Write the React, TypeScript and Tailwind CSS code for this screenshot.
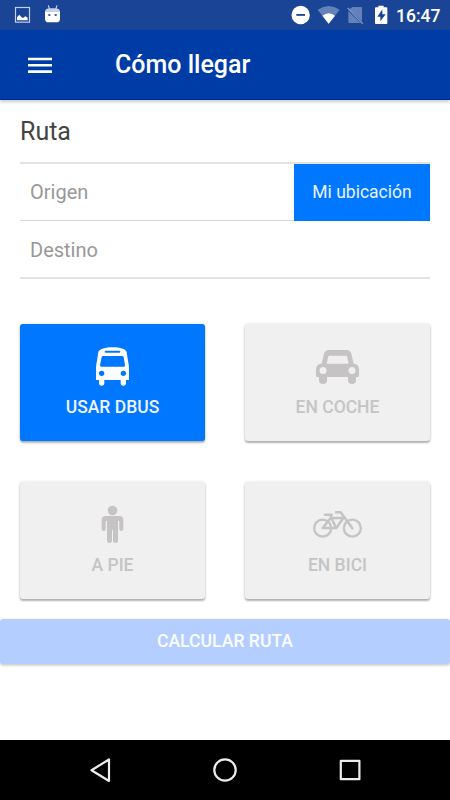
import React from "react";

function StatusBar() {
  return (
    <div className="flex h-[30px] shrink-0 items-center bg-[#1a4597]">
      <svg className="h-[30px] w-[75px]" viewBox="0 0 225 90">
        <rect x="46.500" y="22.500" width="42" height="44" fill="none" stroke="#c3d0e8" strokeWidth="3.500" />
        <path d="M51 61v-9l7-8 6 7 5 3 7-5 7 4v8z" fill="#fff" />
        <path d="M135 34h45v22q0 11-11 11h-23q-11 0-11-11z" fill="#fff" />
        <path d="M135 33q2-7 12-8h21q10 1 12 8z" fill="#c6d2e8" />
        <path d="M145 16l3 10M171 16l-3 10" stroke="#c6d2e8" strokeWidth="3.500" />
        <rect x="145" y="42" width="6" height="6" fill="#3c5fa5" />
        <rect x="164" y="42" width="6" height="6" fill="#3c5fa5" />
      </svg>
      <svg className="ml-auto h-[30px] w-[110px]" viewBox="-30 0 330 90">
        <circle cx="32" cy="45" r="27.500" fill="#fff" />
        <rect x="19" y="42" width="26" height="5.500" fill="#1a4597" />
        <path d="M83 29Q116 7 149 29L116 71z" fill="#6482b9" />
        <path d="M97 47Q116 32 135 47L116 71z" fill="#fff" />
        <path d="M187 21h26q3 0 3 3v40L178 28zM175 33l36 36h-33q-3 0-3-3z" fill="#6482b9" />
        <path d="M173 24l45 47" stroke="#7f98c5" strokeWidth="4" />
        <path d="M258 22h7v-5h16v5h8q3 0 3 3v44q0 3-3 3h-31q-3 0-3-3V25q0-3 3-3z" fill="#fff" />
        <path d="M277 28v15h10L271 64V50h-9z" fill="#1a4597" />
      </svg>
      <span className="ml-[6px] mr-[10px] w-[44px] whitespace-nowrap pt-[2px] text-[17.500px] font-medium leading-[28px] text-white">16:47</span>
    </div>
  );
}

function BusIcon() {
  return (
    <svg className="h-[41px] w-[35px]" viewBox="255 93 105 123">
      <path
        fill="#fff"
        fillRule="evenodd"
        d="M308 97C330 97 347 102 350 111L354 137Q357 150 357 160V195H348V204Q348 212 340 212Q332 212 332 204V195H283V204Q283 212 275 212Q267 212 267 204V195H258V160Q258 150 261 137L265 111C269 102 286 97 308 97ZM287 107Q284 107 284 110T287 113H328Q331 113 331 110T328 107ZM279 123Q276 123 275 126L270 151Q270 155 274 155H342Q346 155 345 151L341 126Q340 123 337 123ZM275 167A8 8 0 1 0 275 183A8 8 0 1 0 275 167ZM340 167A8 8 0 1 0 340 183A8 8 0 1 0 340 167Z"
      />
    </svg>
  );
}

function CarIcon() {
  return (
    <svg className="h-[36px] w-[45px]" viewBox="240 102 135 108">
      <path
        fill="#c5c3c4"
        fillRule="evenodd"
        d="M282 105H334C345 105 348 112 350 120L356 146C366 146 372 153 372 163V182Q372 186 368 186H363V195Q363 207 351 207Q339 207 339 195V186H276V195Q276 207 264 207Q252 207 252 195V186H247Q243 186 243 182V163C243 153 249 146 260 146L266 120C268 112 272 105 282 105ZM283 122Q281 122 280 124L275 146H341L336 124Q335 122 333 122ZM264 156A10.500 10.500 0 1 0 264 177A10.500 10.500 0 1 0 264 156ZM351 156A10.500 10.500 0 1 0 351 177A10.500 10.500 0 1 0 351 156Z"
      />
    </svg>
  );
}

function PersonIcon() {
  return (
    <svg className="h-[39px] w-[23px]" viewBox="273 105 69 117">
      <circle cx="307.500" cy="121.500" r="14.500" fill="#c5c3c4" />
      <path
        fill="#c5c3c4"
        d="M287 138H328Q340 138 340 150V177Q340 183 334 183T328 177V153H324V211Q324 219 316.500 219T309 211V180H306V211Q306 219 298.500 219T291 211V153H287V177Q287 183 281 183T275 177V150Q275 138 287 138Z"
      />
    </svg>
  );
}

function BikeIcon() {
  return (
    <svg className="h-[29px] w-[51px]" viewBox="231 120 153 87" fill="none" stroke="#c5c3c4" strokeLinecap="round" strokeLinejoin="round">
      <circle cx="263" cy="174.500" r="25.500" strokeWidth="7" />
      <circle cx="352" cy="174.500" r="25.500" strokeWidth="7" />
      <path strokeWidth="7.500" d="M270 134H290M303 126.500H317L352 175M286 136L303 174H263L287 144H325L304 174" />
    </svg>
  );
}

interface ModeCardProps {
  label: string;
  icon: React.ReactNode;
  active?: boolean;
}

function ModeCard({ label, icon, active = false }: ModeCardProps) {
  return (
    <button
      className={
        "flex h-[117.500px] flex-col items-center rounded-[3px] text-[17.500px] font-medium leading-[22px] shadow-[0_2px_2px_rgba(0,0,0,0.28),0_0_3px_rgba(0,0,0,0.14)] " +
        (active ? "bg-[#0077ff] text-[#eef3ff]" : "bg-[#f0f0f0] text-[#c5c4c5]")
      }
    >
      <span className="flex h-[72px] items-center justify-center pt-[14px]">{icon}</span>
      <span className="whitespace-nowrap">{label}</span>
    </button>
  );
}

export default function App() {
  return (
    <div className="flex h-[800px] w-[450px] flex-col overflow-hidden bg-white font-['Roboto',sans-serif]">
      <StatusBar />
      <header className="z-10 flex h-[70px] shrink-0 items-center border-b border-[#002b91] bg-[#003ca6] shadow-[0_2px_3px_rgba(0,0,0,0.2)]">
        <button className="ml-[28px]" aria-label="Menu">
          <svg className="block h-[18px] w-[24px]" viewBox="0 0 24 18" stroke="#fff" strokeWidth="2.600">
            <path d="M0 3h24M0 9.300h24M0 15.600h24" />
          </svg>
        </button>
        <h1 className="ml-[63px] pt-px text-[25px] font-medium text-white">Cómo llegar</h1>
      </header>

      <main className="flex flex-1 flex-col">
        <section className="px-5">
          <h2 className="flex h-[62px] items-center pt-[2px] text-[25px] leading-[30px] text-[#444]">Ruta</h2>
          <div className="flex h-[59px] border-b border-t-2 border-b-[#d8d8d8] border-t-[#e4e4e4]">
            <span className="flex flex-1 items-center pl-[10px] text-[20px] text-[#989898]">Origen</span>
            <button className="-mb-px w-[136px] bg-[#0077ff] pb-px text-[17.500px] text-[#e9f1ff]">Mi ubicación</button>
          </div>
          <div className="flex h-[58px] items-center border-b-2 border-[#e4e4e4] pl-[10px] pt-[2px] text-[20px] text-[#989898]">Destino</div>
        </section>

        <section className="mt-[44.500px] grid grid-cols-2 gap-x-10 gap-y-[40.500px] px-5">
          <ModeCard active label="USAR DBUS" icon={<BusIcon />} />
          <ModeCard label="EN COCHE" icon={<CarIcon />} />
          <ModeCard label="A PIE" icon={<PersonIcon />} />
          <ModeCard label="EN BICI" icon={<BikeIcon />} />
        </section>

        <button className="mt-[20px] h-[44.500px] rounded-[3px] bg-[#b4cfff] pb-px text-[17.600px] font-medium text-[#fbfcff] shadow-[0_2px_2px_rgba(0,0,0,0.14),0_0_3px_rgba(0,0,0,0.1)]">
          CALCULAR RUTA
        </button>
      </main>

      <nav className="flex h-[60px] shrink-0 bg-black">
        <svg className="h-[60px] w-[450px]" viewBox="0 0 450 60" fill="none" stroke="#ececec" strokeWidth="2.200" strokeLinejoin="round">
          <path d="M109 19.500V41L91.500 30.200Z" />
          <circle cx="225" cy="30" r="10.700" />
          <rect x="340.800" y="20.800" width="18.600" height="18.400" />
        </svg>
      </nav>
    </div>
  );
}
